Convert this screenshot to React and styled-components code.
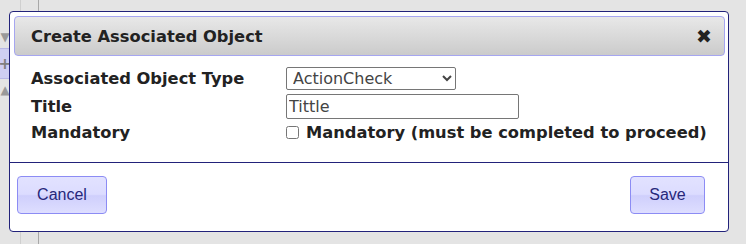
import styled, { createGlobalStyle } from 'styled-components'

const GlobalStyle = createGlobalStyle`
    html, body {
        margin: 0;
        padding: 0;
        background: #e4e4e4;
    }
`;

const Page = styled.div`
    position: relative;
    width: 746px;
    height: 244px;
    overflow: hidden;
    display: flex;
    background: #e4e4e4;
`;

const SideTabs = styled.div`
    width: 10px;
    display: flex;
    flex-direction: column;
    padding-top: 28px;
    color: #9a9a9a;
    font-family: "DejaVu Sans", sans-serif;
    font-size: 12px;

    span{
        height: 18px;
        display: flex;
        align-items: center;
        justify-content: center;
    }
`;

const PlusTab = styled.span`
    && {
        height: 29px;
        background: #cfcff2;
        border-top: 1px solid #b8b8e6;
        border-bottom: 1px solid #b8b8e6;
        margin: 2px 0;
        color: #808080;
        font-size: 16px;
        font-weight: bold;
    }
`;

const Rule = styled.div`
    width: ${props => props.$w}px;
    border-right: 1px solid ${props => props.$color};
`;

const Dialog = styled.div`
    position: absolute;
    left: 9px;
    top: 11px;
    width: 711px;
    background: #ffffff;
    border: 1px solid #22227a;
    border-radius: 4px;
    padding: 4px 3px 0 4px;
    box-sizing: content-box;
`;

const Header = styled.div`
    height: 37px;
    display: flex;
    align-items: center;
    justify-content: space-between;
    padding: 1px 12px 0 16px;
    box-sizing: content-box;
    border: 1px solid #a6a6f0;
    border-radius: 4px;
    background: linear-gradient(#e8e8e8, #cbcbcb);
    font-family: "DejaVu Sans", Verdana, sans-serif;
    font-weight: bold;
    font-size: 16.3px;
    color: #222222;
`;

const Close = styled.span`
    font-size: 19px;
    color: #222222;
    line-height: 1;
`;

const Form = styled.div`
    display: grid;
    grid-template-columns: 255px 1fr;
    align-items: center;
    padding: 11px 0 20px 17px;
    row-gap: 4px;
    font-family: "DejaVu Sans", Verdana, sans-serif;
    font-size: 16.3px;
    color: #222222;
`;

const Label = styled.div`
    font-weight: bold;
    line-height: 19px;
`;

const Select = styled.select`
    width: 170px;
    height: 23px;
    font-family: "DejaVu Sans", Verdana, sans-serif;
    font-size: 16px;
    color: #444444;
    border: 1px solid #767676;
    border-radius: 2px;
    background: #ffffff;
    padding: 0 0 0 2px;
    margin: 0;
`;

const TextInput = styled.input`
    width: 233px;
    height: 25px;
    box-sizing: border-box;
    font-family: "DejaVu Sans", Verdana, sans-serif;
    font-size: 16px;
    color: #444444;
    border: 1px solid #767676;
    border-radius: 2px;
    padding: 0 2px;
    margin: 0;
`;

const CheckLabel = styled.label`
    display: flex;
    align-items: center;
    gap: 7px;
    font-weight: bold;
    line-height: 19px;

    input{
        width: 13px;
        height: 13px;
        margin: 0;
    }
`;

const Footer = styled.div`
    display: flex;
    justify-content: space-between;
    border-top: 1px solid #22227a;
    margin: 0 -3px 0 -4px;
    padding: 13px 23px 17px 7px;
`;

const Button = styled.button`
    width: ${props => props.$w}px;
    height: 38px;
    border: 1px solid #8c8cf4;
    border-radius: 4px;
    background: linear-gradient(#e2e2ff 0%, #dcdcff 48%, #cfcffc 52%, #dedeff 100%);
    color: #27277a;
    font-family: "Liberation Sans", Arial, sans-serif;
    font-size: 16px;
    padding: 0;
`;

export default function App() {
    return(
        <Page>
            <GlobalStyle />
            <SideTabs>
                <span>▼</span>
                <PlusTab>+</PlusTab>
                <span>▲</span>
            </SideTabs>
            <Rule $w={10} $color="#cfcfcf" />
            <Rule $w={17} $color="#a8a8a8" />
            <Dialog>
                <Header>
                    <span>Create Associated Object</span>
                    <Close>✖</Close>
                </Header>
                <Form>
                    <Label>Associated Object Type</Label>
                    <div>
                        <Select defaultValue="ActionCheck">
                            <option>ActionCheck</option>
                        </Select>
                    </div>
                    <Label>Title</Label>
                    <div>
                        <TextInput defaultValue="Tittle" />
                    </div>
                    <Label>Mandatory</Label>
                    <CheckLabel>
                        <input type="checkbox" />
                        Mandatory (must be completed to proceed)
                    </CheckLabel>
                </Form>
                <Footer>
                    <Button $w={90}>Cancel</Button>
                    <Button $w={75}>Save</Button>
                </Footer>
            </Dialog>
        </Page>
    )
}
